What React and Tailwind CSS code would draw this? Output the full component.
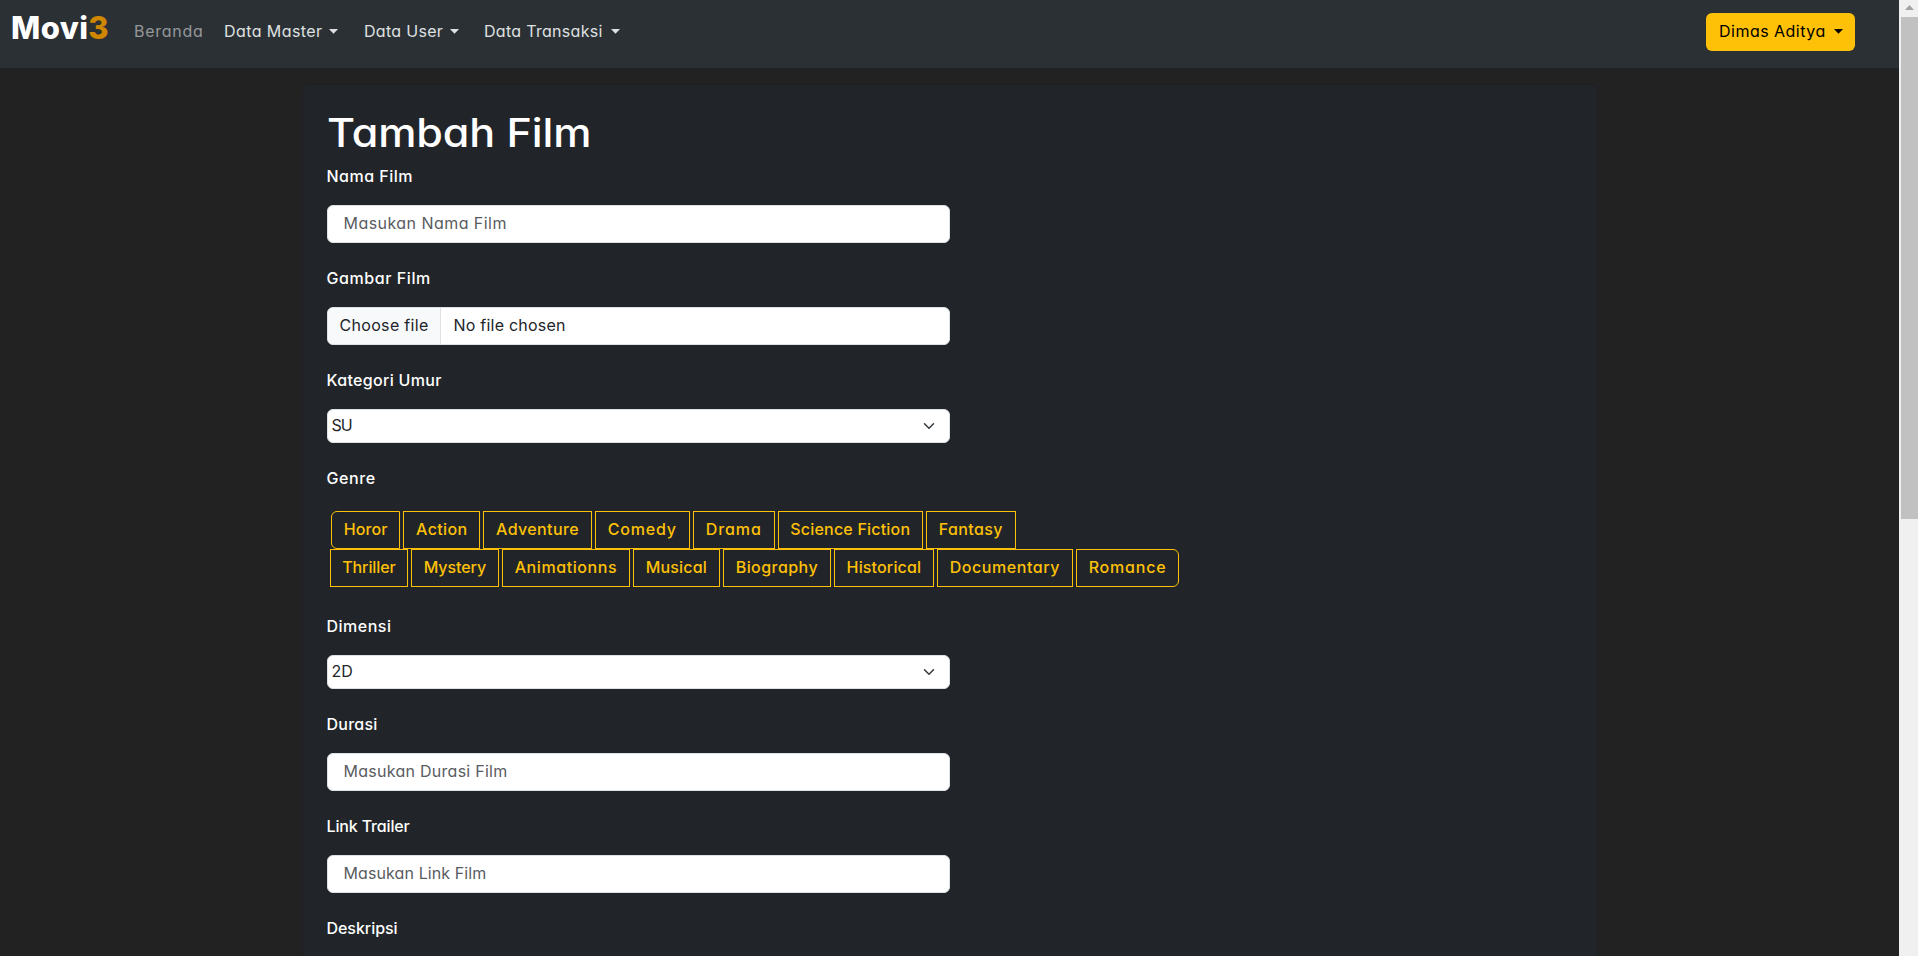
import React from "react";

function Caret({ className = "" }) {
  return (
    <svg className={className} width="9" height="5" viewBox="0 0 9 5" fill="currentColor" aria-hidden="true">
      <path d="M0 0h9L4.5 4.8z" />
    </svg>
  );
}

function Chevron() {
  return (
    <svg width="16" height="12" viewBox="0 0 16 16" fill="none" stroke="#343a40" strokeWidth="2" strokeLinecap="round" strokeLinejoin="round" aria-hidden="true">
      <path d="m2 5 6 6 6-6" />
    </svg>
  );
}

function Field({ label, spacing, children }) {
  return (
    <div className="mb-6">
      <div className={`mb-4 h-6 leading-[22px] font-medium text-white ${spacing}`}>{label}</div>
      {children}
    </div>
  );
}

function TextInput({ placeholder, spacing }) {
  return (
    <input
      type="text"
      placeholder={placeholder}
      className={`block h-[38px] w-[623px] rounded-md border border-[#dee2e6] bg-white pb-[2px] pl-4 leading-[22px] text-[#212529] placeholder:text-[#595c5f] ${spacing}`}
    />
  );
}

function Select({ value, spacing }) {
  return (
    <div className="flex h-[34px] w-[623px] items-center justify-between rounded-md border border-[#dee2e6] bg-white pr-3 pl-1 text-[#212529]">
      <span className={`h-6 leading-[22px] ${spacing}`}>{value}</span>
      <Chevron />
    </div>
  );
}

function NavItem({ label, spacing, width, gap }) {
  return (
    <a className={`flex text-[#dfe0e1] ${width}`}>
      <span className={`whitespace-nowrap ${spacing}`}>{label}</span>
      <Caret className={`mt-[9px] ${gap}`} />
    </a>
  );
}

const genreRows = [
  {
    className: "ml-[4.6px]",
    items: [
      ["Horor", "w-[69.2px] tracking-[0.1px] rounded-l-md"],
      ["Action", "w-[77px] tracking-[0.35px]"],
      ["Adventure", "w-[108.5px] tracking-[0.38px]"],
      ["Comedy", "w-[95px] tracking-[0.8px]"],
      ["Drama", "w-[82px] tracking-[0.92px]"],
      ["Science Fiction", "w-[145px] tracking-[0.2px]"],
      ["Fantasy", "w-[90px] tracking-[0.42px]"],
    ],
  },
  {
    className: "ml-[3.4px]",
    items: [
      ["Thriller", "w-[78px] tracking-[-0.1px]"],
      ["Mystery", "w-[88px] tracking-[-0.05px]"],
      ["Animationns", "w-[128px] tracking-[0.58px]"],
      ["Musical", "w-[87px] tracking-[0.2px]"],
      ["Biography", "w-[108px] tracking-[0.45px]"],
      ["Historical", "w-[100px] tracking-[0.15px]"],
      ["Documentary", "w-[136px] tracking-[0.58px]"],
      ["Romance", "w-[103.3px] tracking-[0.8px] rounded-r-md"],
    ],
  },
];

export default function App() {
  return (
    <div className="flex h-[956px] w-[1918px] overflow-hidden bg-[#222222] font-['Inter','Open_Sans',sans-serif] text-base [font-feature-settings:'cv11']">
      <div className="flex w-[1899px] flex-col">
        <nav className="flex h-[68px] shrink-0 items-start bg-[#2b3035] pr-11 pl-[11px]">
          <a className="mt-1 w-[123px] text-[31px] leading-[48px] font-extrabold tracking-[0.4px] whitespace-nowrap text-white">
            Movi<span className="text-[#d08700]">3</span>
          </a>
          <div className="mt-5 flex leading-[22px]">
            <a className="w-[90px] tracking-[0.75px] text-[#959899]">Beranda</a>
            <NavItem label="Data Master" spacing="tracking-[0.42px]" width="w-[140px]" gap="ml-[7px]" />
            <NavItem label="Data User" spacing="tracking-[0.3px]" width="w-[120px]" gap="ml-[7px]" />
            <NavItem label="Data Transaksi" spacing="tracking-[0.3px]" width="w-[136px]" gap="ml-[8px]" />
          </div>
          <button className="mt-[13px] ml-auto flex h-[38px] w-[149px] rounded-md bg-[#ffc107] pt-[7px] pl-[13px] leading-[22px] text-black">
            <span className="tracking-[0.48px] whitespace-nowrap">Dimas Aditya</span>
            <Caret className="mt-[9px] ml-2" />
          </button>
        </nav>

        <main className="mx-auto mt-4 h-[1200px] w-[1296px] shrink-0 rounded-md border border-[#1e1f20] bg-[#212529] p-6">
          <h1 className="mb-2 w-fit origin-left scale-x-[1.09] text-[39.5px] leading-[48px] font-medium tracking-[-0.1px] whitespace-nowrap text-white">
            Tambah Film
          </h1>

          <Field label="Nama Film" spacing="tracking-[0.48px]">
            <TextInput placeholder="Masukan Nama Film" spacing="tracking-[0.45px]" />
          </Field>

          <Field label="Gambar Film" spacing="tracking-[0.58px]">
            <div className="flex h-[38px] w-[623px] overflow-hidden rounded-md border border-[#dee2e6] bg-white leading-[22px] text-[#212529]">
              <span className="w-[113px] border-r border-[#dee2e6] bg-[#f8f9fa] pt-1.5 pl-3 tracking-[0.32px]">Choose file</span>
              <span className="pt-1.5 pl-[13px] tracking-[0.22px]">No file chosen</span>
            </div>
          </Field>

          <Field label="Kategori Umur" spacing="tracking-[0.32px]">
            <Select value="SU" spacing="tracking-[-1px]" />
          </Field>

          <Field label="Genre" spacing="tracking-[0.6px]">
            <div className="mb-7 pt-1">
              {genreRows.map((row) => (
                <div key={row.className} className={`flex gap-[3px] ${row.className}`}>
                  {row.items.map(([name, style]) => (
                    <span
                      key={name}
                      className={`h-[38px] shrink-0 border border-[#ffc107] pt-1.5 text-center leading-[22px] font-[450] whitespace-nowrap text-[#ffc107] ${style}`}
                    >
                      {name}
                    </span>
                  ))}
                </div>
              ))}
            </div>
          </Field>

          <Field label="Dimensi" spacing="tracking-[0.5px]">
            <Select value="2D" spacing="tracking-[0px]" />
          </Field>

          <Field label="Durasi" spacing="tracking-[0.25px]">
            <TextInput placeholder="Masukan Durasi Film" spacing="tracking-[0.27px]" />
          </Field>

          <Field label="Link Trailer" spacing="tracking-[-0.15px]">
            <TextInput placeholder="Masukan Link Film" spacing="tracking-[0.1px]" />
          </Field>

          <Field label="Deskripsi" spacing="tracking-[-0.05px]" />
        </main>
      </div>

      <div className="flex w-[19px] flex-col bg-[#f0f0f0] pl-[2px]">
        <div className="flex h-[17px] shrink-0 justify-center pt-[5px]">
          <svg width="9" height="5" viewBox="0 0 9 5" fill="#a3a3a3" aria-hidden="true">
            <path d="M4.5 0 9 5H0z" />
          </svg>
        </div>
        <div className="h-[502px] w-[17px] shrink-0 bg-[#c1c1c1]" />
      </div>
    </div>
  );
}
